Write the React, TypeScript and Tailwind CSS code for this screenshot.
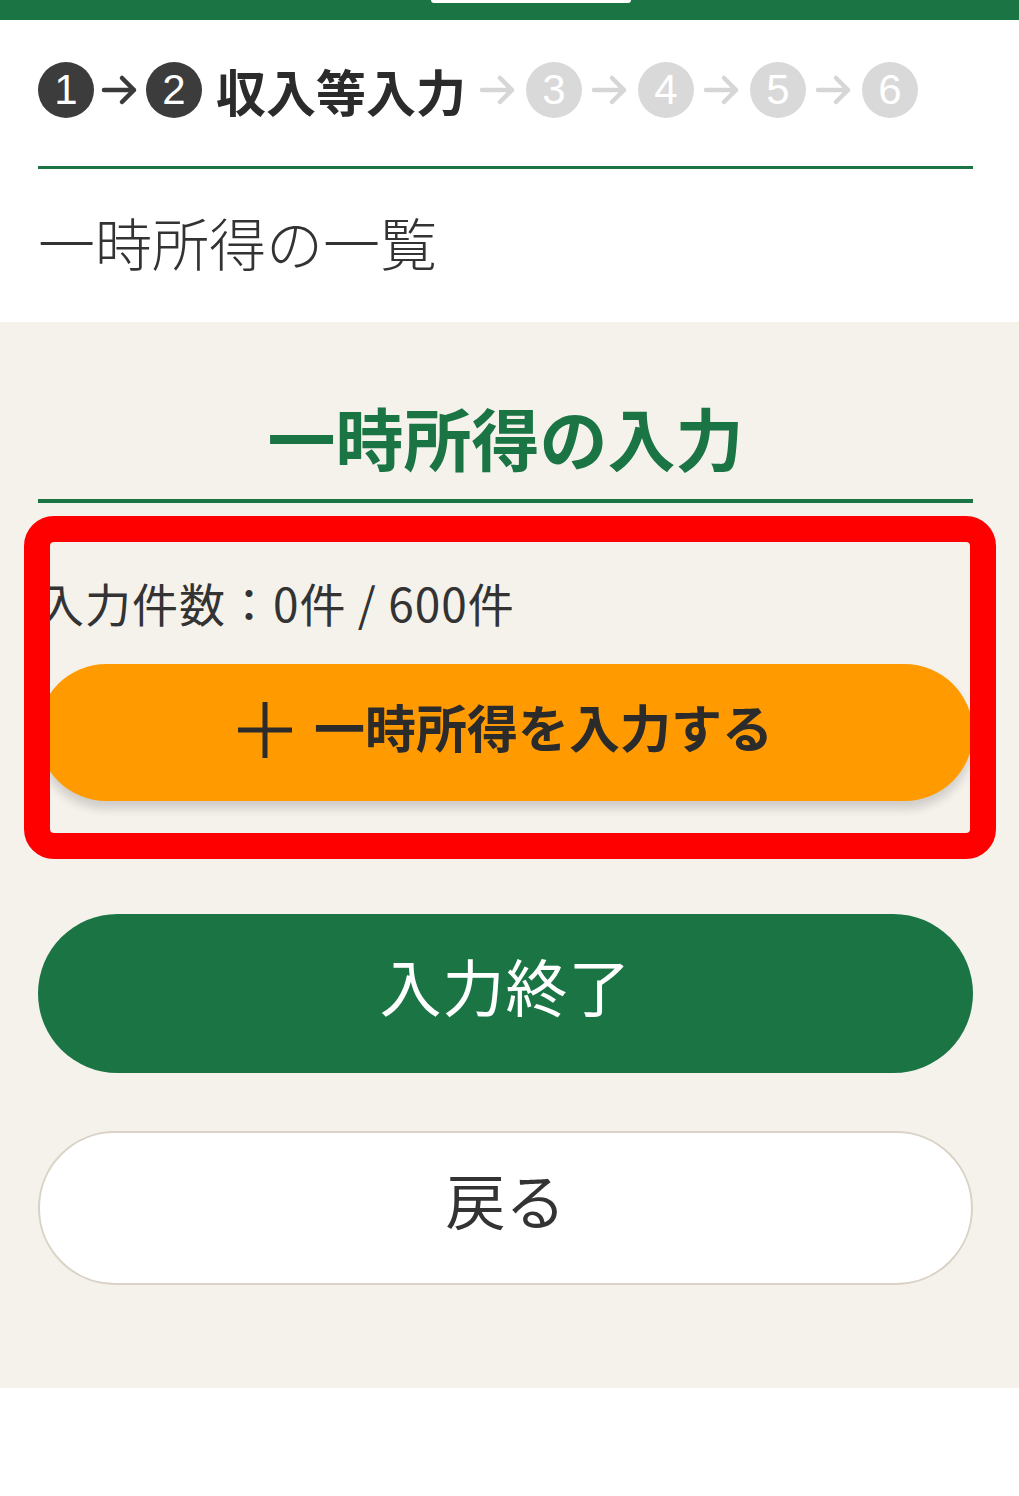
const steps = [
  { n: '1', done: true },
  { n: '2', done: true, label: '収入等入力' },
  { n: '3', done: false },
  { n: '4', done: false },
  { n: '5', done: false },
  { n: '6', done: false },
];

function Arrow({ active }: { active: boolean }) {
  return (
    <svg width="40" height="40" viewBox="0 0 40 40" className="shrink-0">
      <path
        d="M4 20 H34 M22 8 L34 20 L22 32"
        fill="none"
        stroke={active ? '#3a3a3a' : '#d6d6d6'}
        strokeWidth="4.5"
        strokeLinecap="round"
        strokeLinejoin="round"
      />
    </svg>
  );
}

export default function App() {
  return (
    <div className="min-h-[1496px] bg-white font-['Noto_Sans_CJK_JP','Noto_Sans',sans-serif] text-[#333]">
      {/* ヘッダーバー */}
      <div className="h-[20px] bg-[#1a7444] flex justify-center">
        <div className="w-[200px] h-[3px] bg-white rounded-b-md ml-[42px]" />
      </div>

      {/* ステップ + 見出し */}
      <div className="pl-[38px] pr-[46px] pt-[42px] pb-[37px]">
        <div className="flex items-center h-[56px]">
          {steps.map((s, i) => (
            <div key={s.n} className="flex items-center">
              {i > 0 && (
                <div className={i === 1 ? 'mx-[6px]' : 'mx-[8px]'}>
                  <Arrow active={s.done} />
                </div>
              )}
              <div
                className={`w-[56px] h-[56px] rounded-full flex items-center justify-center text-white text-[42px] leading-none font-['Liberation_Sans',sans-serif] ${
                  s.done ? 'bg-[#3c3c3c]' : 'bg-[#d9d9d9]'
                }`}
              >
                {s.n}
              </div>
              {s.label && (
                <span className="ml-[14px] mr-[4px] text-[50px] font-bold leading-none text-[#2b2b2b]">
                  {s.label}
                </span>
              )}
            </div>
          ))}
        </div>
        <div className="mt-[48px] h-[3px] bg-[#1a7444]" />
        <h1 className="mt-[30px] text-[57px] leading-[1.5] font-light text-[#333]">
          一時所得の一覧
        </h1>
      </div>

      {/* 入力エリア */}
      <div className="bg-[#f5f2ec] pl-[38px] pr-[46px] pt-[64px] pb-[103px]">
        <h2 className="text-center text-[68px] leading-[1.5] font-bold text-[#1a7444]">
          一時所得の入力
        </h2>
        <div className="mt-[11px] h-[4px] bg-[#1a7444]" />

        <div className="relative mt-[13px] pt-[54px] pb-[58px]">
          <p className="text-[46px] leading-[1.5] text-[#333] tracking-[1px] -mt-[2px]">
            入力件数：0件 / 600件
          </p>
          <button className="mt-[27px] w-full h-[137px] pb-[12px] rounded-full bg-[#ff9b00] shadow-[0_8px_10px_rgba(0,0,0,0.15)] flex items-center justify-center gap-[22px] text-[51px] font-bold text-[#2b2b2b]">
            <svg width="54" height="56" viewBox="0 0 54 56" className="shrink-0 mt-[8px]">
              <path d="M27 0 V56 M0 28 H54" stroke="#2b2b2b" strokeWidth="5" fill="none" />
            </svg>
            <span>一時所得を入力する</span>
          </button>
          {/* 注目枠 */}
          <div className="pointer-events-none absolute -left-[14px] -right-[23px] top-0 bottom-0 border-[26px] border-[#ff0000] rounded-[30px]" />
        </div>

        <button className="mt-[55px] w-full h-[159px] pb-[16px] rounded-full bg-[#1a7444] text-white text-[62px] tracking-[1px]">
          入力終了
        </button>
        <button className="mt-[58px] w-full h-[154px] pb-[18px] rounded-full bg-white border-2 border-[#d9d2c6] text-[60px] text-[#333]">
          戻る
        </button>
      </div>

      <div className="h-[109px] bg-white" />
    </div>
  );
}
